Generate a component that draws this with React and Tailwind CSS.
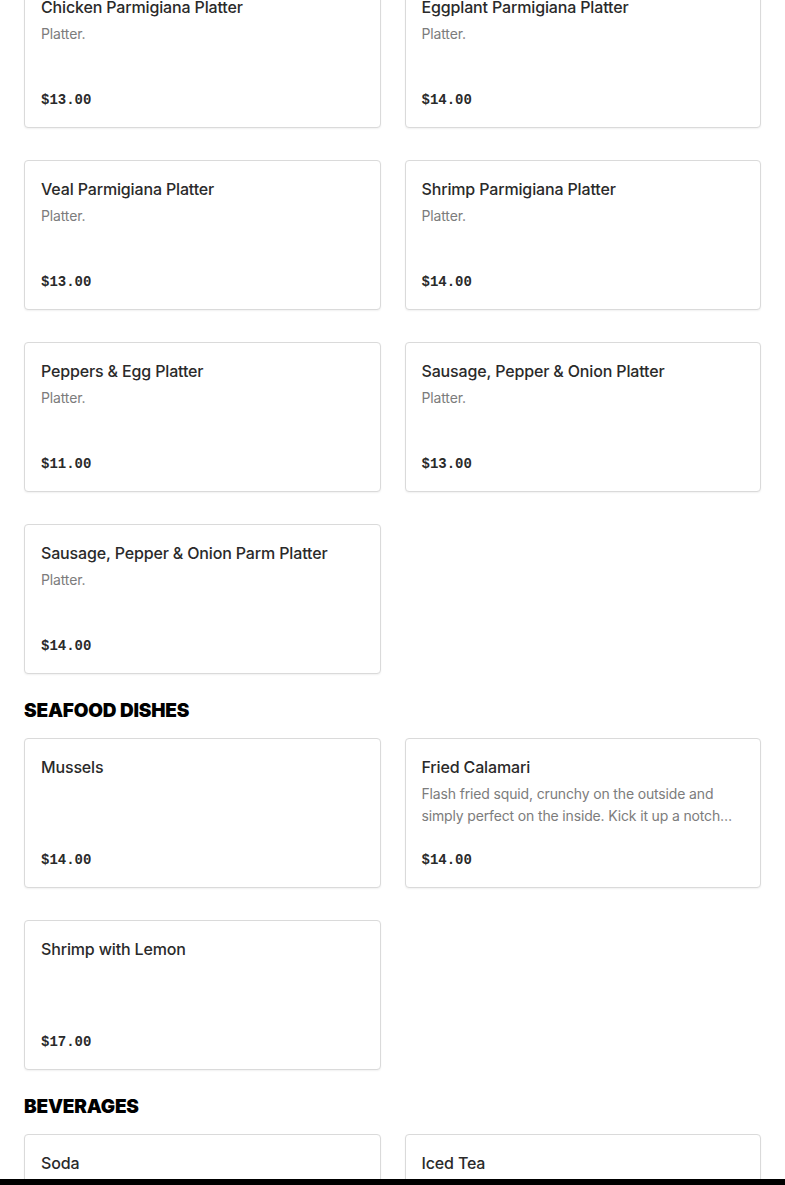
import React from "react";

const sections = [
  {
    title: null,
    items: [
      { name: "Chicken Parmigiana Platter", desc: "Platter.", price: "$13.00" },
      { name: "Eggplant Parmigiana Platter", desc: "Platter.", price: "$14.00" },
      { name: "Veal Parmigiana Platter", desc: "Platter.", price: "$13.00" },
      { name: "Shrimp Parmigiana Platter", desc: "Platter.", price: "$14.00" },
      { name: "Peppers & Egg Platter", desc: "Platter.", price: "$11.00" },
      { name: "Sausage, Pepper & Onion Platter", desc: "Platter.", price: "$13.00" },
      { name: "Sausage, Pepper & Onion Parm Platter", desc: "Platter.", price: "$14.00" },
    ],
  },
  {
    title: "SEAFOOD DISHES",
    items: [
      { name: "Mussels", desc: "", price: "$14.00" },
      {
        name: "Fried Calamari",
        desc: "Flash fried squid, crunchy on the outside and simply perfect on the inside. Kick it up a notch with our spicy marinara sauce.",
        price: "$14.00",
      },
      { name: "Shrimp with Lemon", desc: "", price: "$17.00" },
    ],
  },
  {
    title: "BEVERAGES",
    items: [
      { name: "Soda", desc: "", price: "$2.00" },
      { name: "Iced Tea", desc: "", price: "$3.00" },
    ],
  },
];

function Card({ item }) {
  return (
    <div className="flex h-[150px] flex-col rounded-[4px] border border-[#dadada] bg-white px-4 pt-4 pb-4 shadow-[0_1px_2px_rgba(0,0,0,0.06)]">
      <div className="text-[16px] leading-[24px] font-medium text-[#2a2a2a] [font-family:Inter,'Noto_Sans',sans-serif] tracking-[-0.15px]">
        {item.name}
      </div>
      {item.desc ? (
        <div className="mt-[4px] line-clamp-2 text-[14px] leading-[22px] text-[#7c7c7c] [font-family:Inter,'Noto_Sans',sans-serif] tracking-[-0.15px]">
          {item.desc}
        </div>
      ) : null}
      <div className="flex-1" />
      <div className="text-[14px] leading-[22px] font-bold text-[#2a2a2a] [font-family:'Liberation_Mono',monospace]">
        {item.price}
      </div>
    </div>
  );
}

export default function App() {
  return (
    <div className="min-h-screen bg-white">
      <div className="mt-[-22px] px-6">
        {sections.map((s, i) => (
          <div key={i}>
            {s.title ? (
              <h2 className="mt-[23px] mb-[13px] text-[19px] leading-[28px] font-black text-black [font-family:Inter,'Noto_Sans',sans-serif] tracking-[-0.2px]">
                {s.title}
              </h2>
            ) : null}
            <div className="grid grid-cols-2 gap-x-6 gap-y-8">
              {s.items.map((it) => (
                <Card key={it.name} item={it} />
              ))}
            </div>
          </div>
        ))}
        <div className="h-10" />
      </div>
      <div className="fixed bottom-0 left-0 h-[6px] w-full bg-black" />
    </div>
  );
}
